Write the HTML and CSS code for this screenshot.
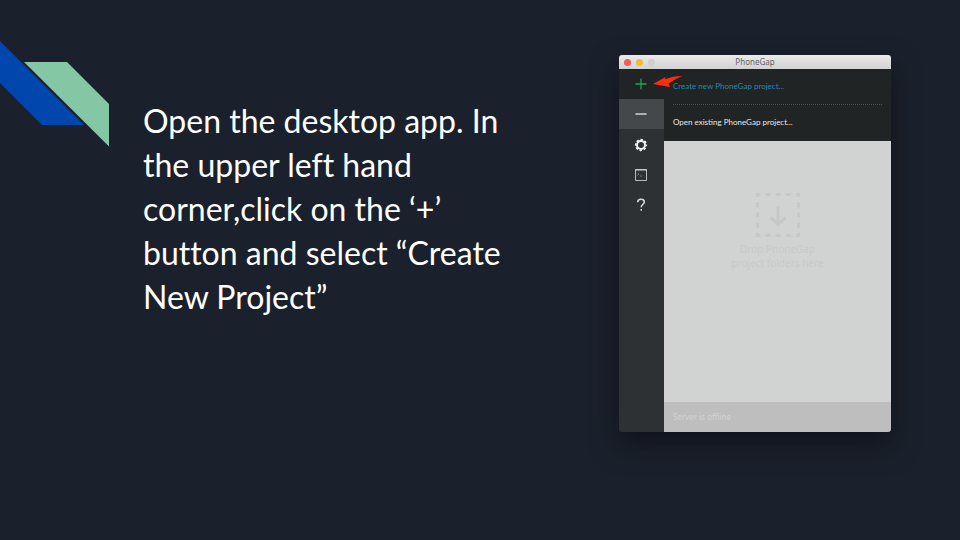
FILE: index.html
```html
<!DOCTYPE html>
<html lang="en">
<head>
<meta charset="utf-8">
<title>Create a new project</title>
<link rel="stylesheet" href="styles.css">
</head>
<body>
<main class="slide">
  <svg class="ribbons" width="110" height="150" viewBox="0 0 110 150" aria-hidden="true">
    <path fill="#0146ad" d="M0 41L84 125H42L0 83Z"/>
    <path fill="#83c7a5" d="M24 62H67L109 104V146.500Z"/>
  </svg>
  <p class="instruction">Open the desktop app. In the upper left hand corner,click on the ‘+’ button and select “Create New Project”</p>
  <section class="app">
    <header class="titlebar">
      <div class="lights"><i class="light close"></i><i class="light minimize"></i><i class="light disabled"></i></div>
      <span class="title">PhoneGap</span>
    </header>
    <div class="workspace">
      <nav class="sidebar">
        <button class="tool add" aria-label="Add project">
          <svg width="12" height="12" viewBox="0 0 12 12"><path d="M6 .5V11.500M.5 6H11.500" stroke="#22a053" stroke-width="1.300"/></svg>
        </button>
        <button class="tool remove" aria-label="Remove project">
          <svg width="12" height="12" viewBox="0 0 12 12"><path d="M.5 6H11.500" stroke="#d2d4d4" stroke-width="1.500"/></svg>
        </button>
        <button class="tool" aria-label="Settings">
          <svg width="14" height="14" viewBox="0 0 14 14" fill="none" stroke="#f0f1f1"><circle cx="7" cy="7" r="4" stroke-width="2"/><circle cx="7" cy="7" r="5.300" stroke-width="1.700" stroke-dasharray="2.400 1.763" stroke-dashoffset="1.200"/></svg>
        </button>
        <button class="tool" aria-label="Console">
          <svg width="12" height="12" viewBox="0 0 12 12" fill="none" stroke="#b9bcbd"><path d="M.5 .5H11.500V11.500H.5Z"/><path d="M0 1H12" stroke="#d2d4d4"/><path d="M2.500 4L4 5.200L2.500 6.500M5 7H7" stroke-width=".8" stroke="#8d9192"/></svg>
        </button>
        <button class="tool" aria-label="Help">
          <svg width="12" height="14" viewBox="0 0 12 14" fill="none" stroke="#d9dbdb" stroke-width="1.500"><path d="M2.700 4.200C2.700 2.200 4.200 1.300 6 1.300C8 1.300 9.300 2.400 9.300 4C9.300 6.300 6.200 6.300 6.200 9.300"/><path d="M6.200 11V12.700"/></svg>
        </button>
      </nav>
      <div class="content">
        <div class="menu">
          <svg class="arrow" width="30" height="14" viewBox="0 0 30 14" aria-hidden="true"><path fill="#fb2e0c" d="M0 9L12.500 2L11.700 4.200Q20 1 29.500 .8Q21 4.800 15.500 8.500L17 12Z"/></svg>
          <a class="create" href="#create">Create new PhoneGap project...</a>
          <a class="open" href="#open">Open existing PhoneGap project...</a>
        </div>
        <div class="dropzone">
          <svg width="46" height="46" viewBox="0 0 46 46" fill="none" stroke="#c6c8c7"><path stroke-width="3" stroke-dasharray="5 5.250" stroke-dashoffset="2.500" d="M2.500 2.500H43.500V43.500H2.500Z"/><path stroke-width="3" d="M23 14V32M15.500 25.500L23 32.500L30.500 25.500"/></svg>
          <p class="hint">Drop PhoneGap<br>project folders here</p>
        </div>
        <footer class="status">Server is offline</footer>
      </div>
    </div>
  </section>
</main>
</body>
</html>
```

FILE: styles.css
```css
* {
  box-sizing: border-box;
}

body {
  margin: 0;
  background: #1b212c;
  color: #fff;
  font-family: Lato, sans-serif;
}

.slide {
  position: relative;
  display: grid;
  grid-template-columns: 47fr 34fr;
  column-gap: 100px;
  align-items: start;
  min-height: 100vh;
  padding: 55px 69px 55px 143px;
}

.ribbons {
  position: absolute;
  top: 0;
  left: 0;
}

.instruction {
  margin: 44px 0 0;
  font-size: 32px;
  font-variant-ligatures: none;
  line-height: 44px;
}

.app {
  border-radius: 3px;
  overflow: hidden;
  box-shadow: 0 12px 28px rgba(8, 8, 16, 0.6);
  font-family: "Noto Sans", sans-serif;
  font-size: 8px;
  line-height: 14px;
}

.titlebar {
  display: grid;
  grid-template-columns: 1fr auto 1fr;
  align-items: center;
  padding: 0 5px;
  background: linear-gradient(#eaeaea, #d2d2d2);
  color: #626262;
}

.lights {
  display: flex;
  gap: 5px;
}

.light {
  width: 7px;
  height: 7px;
  border-radius: 50%;
}

.close {
  background: #f45b53;
}

.minimize {
  background: #f6b92f;
}

.disabled {
  background: #cfcfcf;
}

.workspace {
  display: grid;
  grid-template-columns: 45px 1fr;
  background: #2d3133;
}

.tool {
  display: flex;
  align-items: center;
  justify-content: center;
  width: 100%;
  height: 30px;
  padding: 0 1px 0 0;
  border: 0;
  background: none;
}

.add {
  background: #202425;
}

.remove {
  margin-bottom: 1px;
  background: #44484b;
}

.content {
  display: flex;
  flex-direction: column;
}

.menu {
  position: relative;
  padding: 0 9px 1px;
  background: #202425;
  font-family: Lato, sans-serif;
}

.arrow {
  position: absolute;
  top: 6px;
  left: -11px;
}

.menu a {
  display: block;
  line-height: 35px;
  text-decoration: none;
}

.menu .create {
  border-bottom: 1px dotted #4a5051;
  color: #2b86a9;
}

.menu .open {
  color: #e8e9e9;
}

.dropzone {
  display: flex;
  flex-direction: column;
  align-items: center;
  height: 261px;
  padding-top: 51px;
  background: #d1d3d2;
}

.hint {
  margin: 4px 0 0;
  color: #c8cac9;
  font-size: 10px;
  text-align: center;
}

.status {
  padding: 0 9px;
  background: #bebebe;
  color: #d2d2d2;
  line-height: 30px;
}
```
